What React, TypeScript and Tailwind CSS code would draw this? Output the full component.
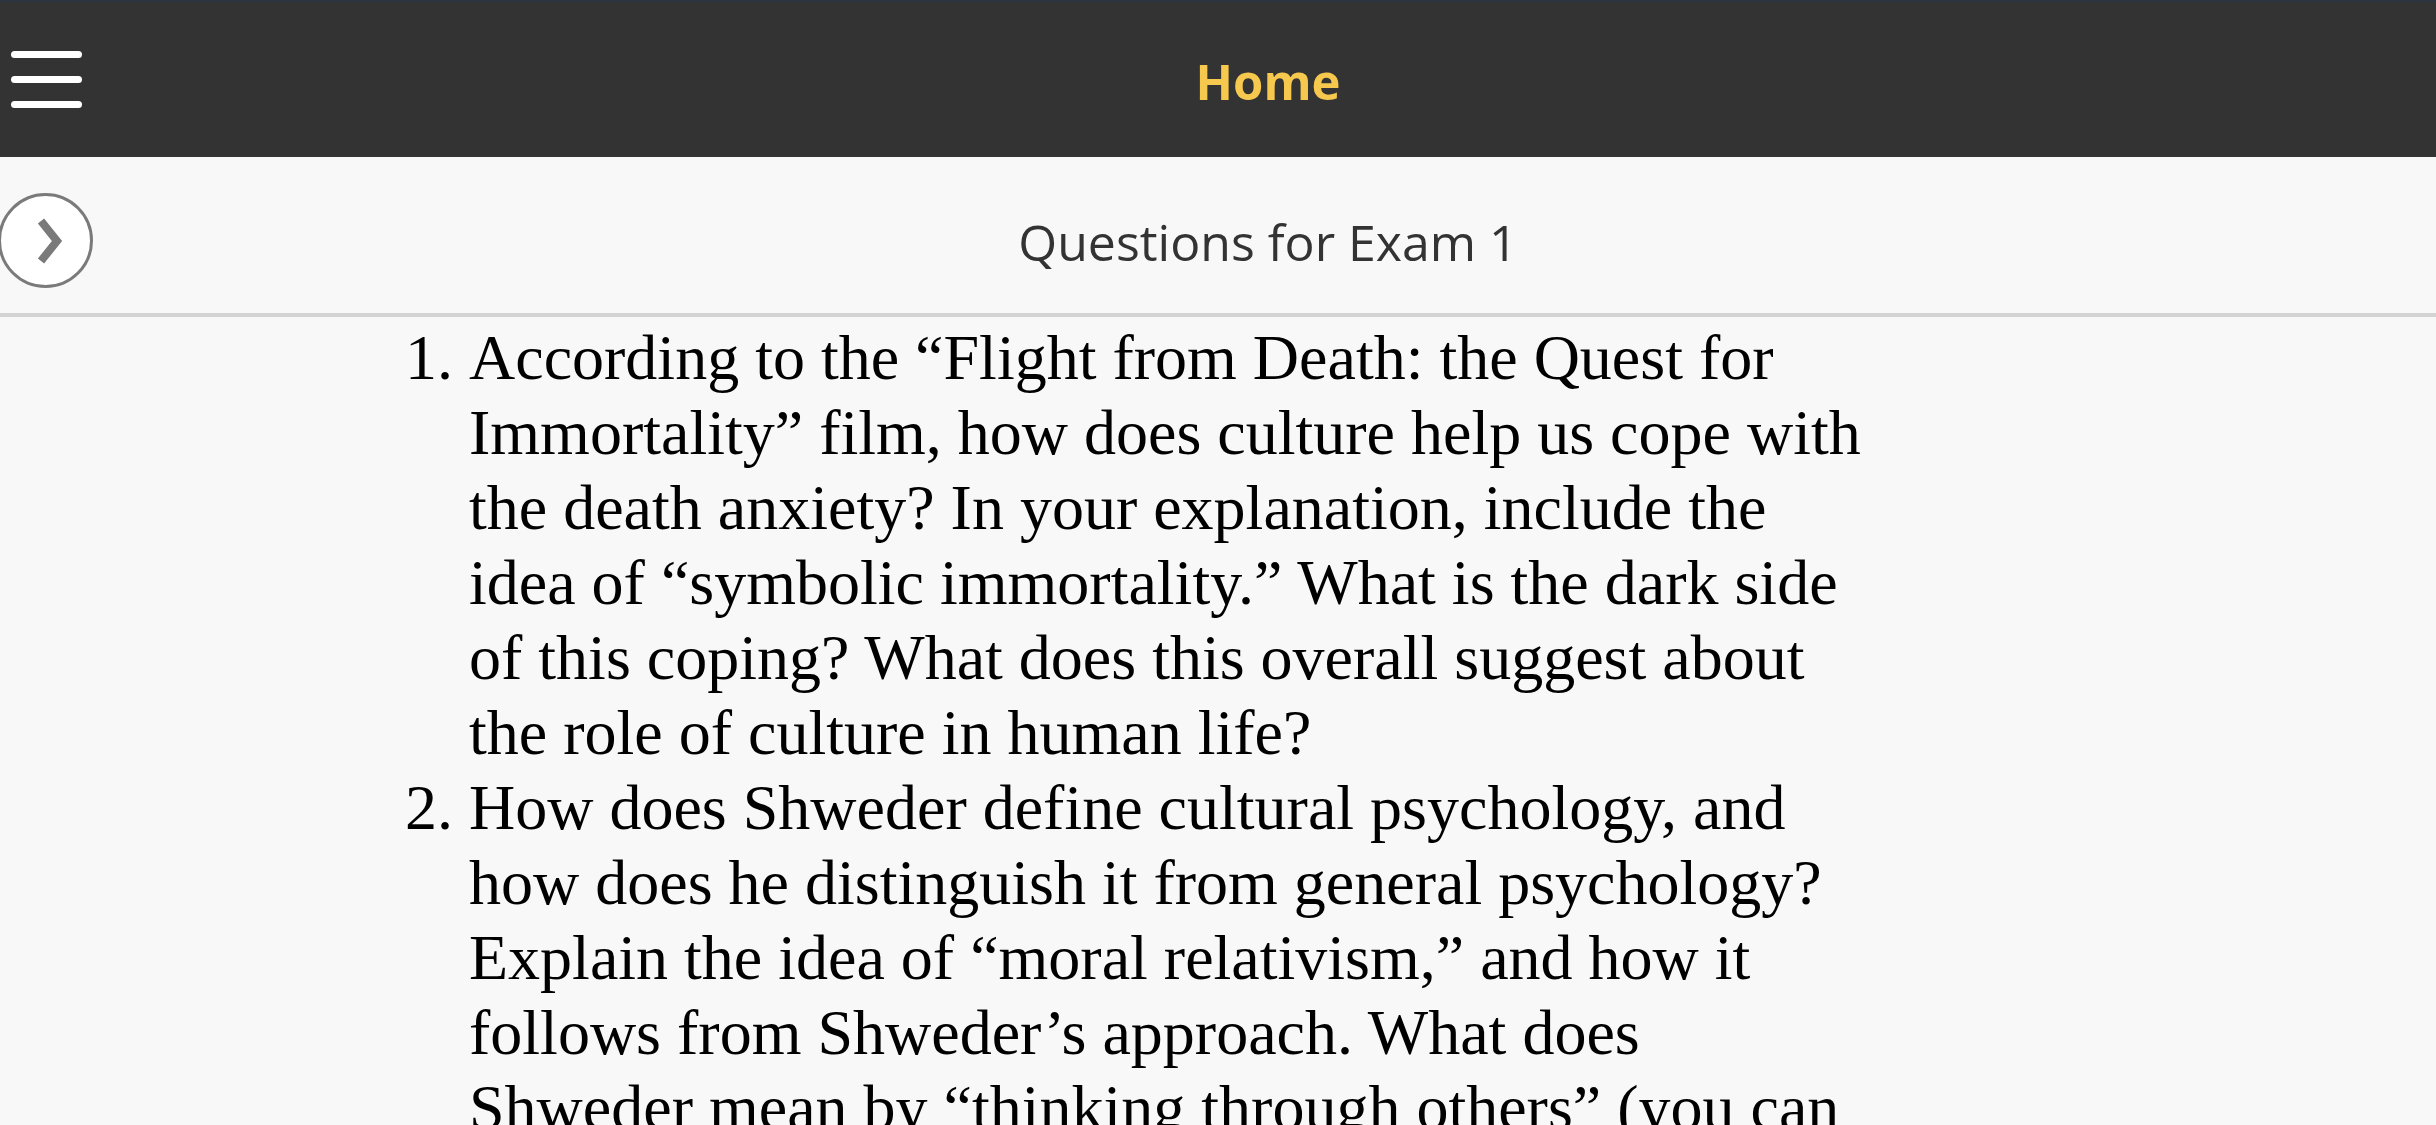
import * as React from "react";

const questions = [
  "According to the “Flight from Death: the Quest for Immortality” film, how does culture help us cope with the death anxiety? In your explanation, include the idea of “symbolic immortality.” What is the dark side of this coping? What does this overall suggest about the role of culture in human life?",
  "How does Shweder define cultural psychology, and how does he distinguish it from general psychology? Explain the idea of “moral relativism,” and how it follows from Shweder’s approach. What does Shweder mean by “thinking through others” (you can use examples from the readings and the lectures to illustrate your answer)?",
  "Describe the main differences between independent and interdependent views of the self, and give examples of how each shapes cognition, emotion and motivation.",
];

export default function App() {
  return (
    <div className="h-screen w-full overflow-hidden bg-[#f8f8f8] font-['Open_Sans',sans-serif]">
      {/* top bar */}
      <header className="h-[157px] bg-[#333333] border-t-[2px] border-[#2c3440] flex items-center">
        <button className="w-[100px] h-full flex flex-col justify-center gap-[18px] pl-[11px]">
          <span className="block w-[71px] h-[7px] rounded-full bg-white" />
          <span className="block w-[71px] h-[7px] rounded-full bg-white" />
          <span className="block w-[71px] h-[7px] rounded-full bg-white" />
        </button>
        <h1 className="flex-1 text-center text-[49px] font-bold text-[#f6c94e] leading-none pt-[4px]">
          Home
        </h1>
      </header>

      {/* sub bar */}
      <div className="h-[160px] bg-[#f8f8f8] border-b-[4px] border-[#d3d3d3] flex items-center relative">
        <button className="absolute left-[-2px] top-[36px] w-[95px] h-[95px] rounded-full bg-white border-[3px] border-[#7a7a7a] flex items-center justify-center">
          <svg width="32" height="50" viewBox="0 0 32 50" className="ml-[6px]">
            <path d="M8 5 L24 25 L8 45" fill="none" stroke="#7a7a7a" strokeWidth="8" />
          </svg>
        </button>
        <h2 className="flex-1 text-center text-[50px] text-[#333333] pl-[100px] pt-[14px]">
          Questions for Exam 1
        </h2>
      </div>

      {/* content */}
      <ol className="list-decimal pl-[469px] pr-[562px] pt-[3px] font-['Liberation_Serif','Times_New_Roman',serif] text-[64px] leading-[75px] text-black">
        {questions.map((q, i) => (
          <li key={i}>{q}</li>
        ))}
      </ol>
    </div>
  );
}
